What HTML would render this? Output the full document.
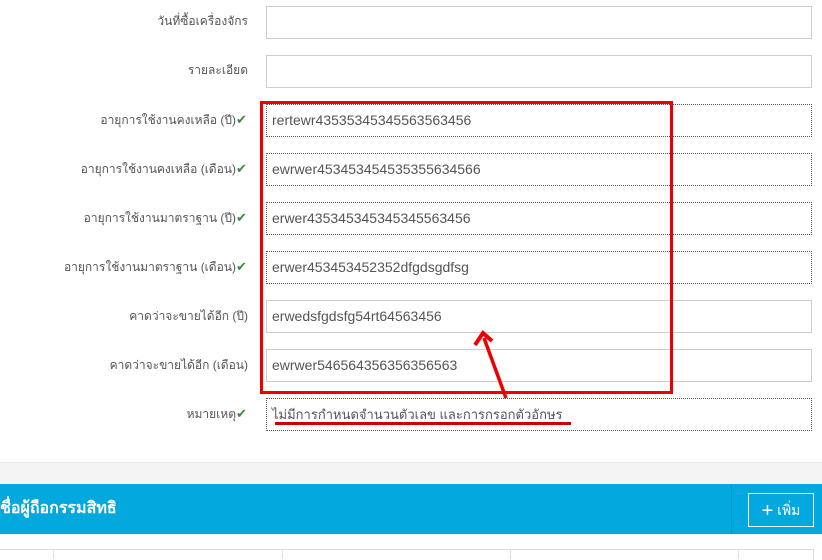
<!DOCTYPE html>
<html><head><meta charset="utf-8"><style>
body{margin:0;width:822px;height:559px;overflow:hidden;background:#fff;font-family:"Liberation Sans","DejaVu Sans",sans-serif;position:relative}
.lbl{position:absolute;right:574px;font-size:12px;color:#555;text-align:right;white-space:nowrap}
.ck{position:absolute;color:#3a8a3a;font-size:13px}
.in{position:absolute;left:266px;height:31px;border:1px solid #ccc;box-sizing:content-box;font-size:14px;color:#555;line-height:31px;padding-left:5px;width:539px}
.d{border:1px dotted #555}
</style></head><body>
<div class="lbl" style="top:12px">วันที่ซื้อเครื่องจักร</div>
<div class="in" style="top:6px"></div>
<div class="lbl" style="top:61px">รายละเอียด</div>
<div class="in" style="top:55px"></div>

<div class="lbl" style="top:111px;right:586px">อายุการใช้งานคงเหลือ (ปี)</div><div class="ck" style="left:236px;top:112px">✔</div>
<div class="in d" style="top:104px">rertewr43535345345563563456</div>
<div class="lbl" style="top:160px;right:586px">อายุการใช้งานคงเหลือ (เดือน)</div><div class="ck" style="left:236px;top:161px">✔</div>
<div class="in d" style="top:153px">ewrwer453453454535355634566</div>
<div class="lbl" style="top:209px;right:586px">อายุการใช้งานมาตราฐาน (ปี)</div><div class="ck" style="left:236px;top:210px">✔</div>
<div class="in d" style="top:202px">erwer435345345345345563456</div>
<div class="lbl" style="top:258px;right:586px">อายุการใช้งานมาตราฐาน (เดือน)</div><div class="ck" style="left:236px;top:259px">✔</div>
<div class="in d" style="top:251px">erwer453453452352dfgdsgdfsg</div>
<div class="lbl" style="top:307px">คาดว่าจะขายได้อีก (ปี)</div>
<div class="in" style="top:300px">erwedsfgdsfg54rt64563456</div>
<div class="lbl" style="top:356px">คาดว่าจะขายได้อีก (เดือน)</div>
<div class="in" style="top:349px">ewrwer546564356356356563</div>
<div class="lbl" style="top:405px;right:586px">หมายเหตุ</div><div class="ck" style="left:236px;top:406px">✔</div>
<div class="in d" style="top:398px;font-size:13px">ไม่มีการกำหนดจำนวนตัวเลข และการกรอกตัวอักษร</div>

<div style="position:absolute;left:260px;top:101px;width:407px;height:287px;border:3px solid #e00"></div>
<div style="position:absolute;left:275px;top:422px;width:296px;height:3px;background:#c00"></div>
<svg style="position:absolute;left:0;top:0" width="822" height="559"><line x1="506" y1="398" x2="484" y2="338" stroke="#e00" stroke-width="3.5"/><polyline points="475,345 483,333 492,341" fill="none" stroke="#e00" stroke-width="4"/></svg>

<div style="position:absolute;left:0;top:462px;width:822px;height:22px;background:#f4f4f4;border-top:1px solid #e8e8e8"></div>
<div style="position:absolute;left:0;top:484px;width:822px;height:50px;background:#03a8de"></div>
<div style="position:absolute;left:0;top:496px;font-size:16px;color:#fff;font-weight:bold">ชื่อผู้ถือกรรมสิทธิ</div>
<div style="position:absolute;left:731px;top:484px;width:1px;height:50px;background:#0395c4"></div>
<div style="position:absolute;left:748px;top:493px;border:1px solid #fff;color:#fff;font-size:14px;line-height:32px;text-align:center;box-sizing:border-box;width:66px;height:34px"><span style="font-size:20px;vertical-align:-2px">+</span> เพิ่ม</div>
<div style="position:absolute;left:0;top:549px;width:813px;height:10px;border-top:1px solid #ddd;border-right:1px solid #ddd"></div>
<div style="position:absolute;left:53px;top:549px;width:1px;height:10px;background:#ddd"></div>
<div style="position:absolute;left:282px;top:549px;width:1px;height:10px;background:#ddd"></div>
<div style="position:absolute;left:510px;top:549px;width:1px;height:10px;background:#ddd"></div>
<div style="position:absolute;left:738px;top:549px;width:1px;height:10px;background:#ddd"></div>
</body></html>
